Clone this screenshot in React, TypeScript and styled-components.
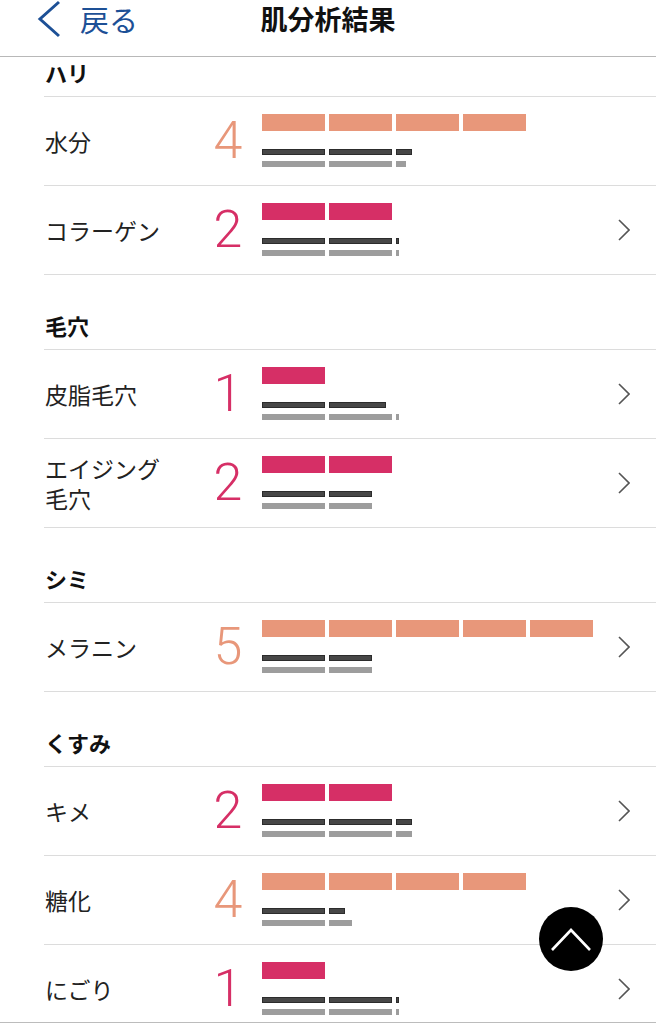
import React from 'react';
import styled, { createGlobalStyle } from 'styled-components';

const ORANGE = '#e8977a';
const PINK = '#d62f66';

const GlobalStyle = createGlobalStyle`
  html, body {
    margin: 0;
    padding: 0;
    background: #fff;
  }
  body {
    font-family: "Noto Sans CJK JP", "Noto Sans", sans-serif;
    color: #222;
  }
`;

const Page = styled.div`
  position: relative;
  width: 656px;
  height: 1024px;
  overflow: hidden;
  display: flex;
  flex-direction: column;
  background: #fff;
`;

const Header = styled.header`
  flex: none;
  height: 56px;
  border-bottom: 1px solid #b8b8b8;
  display: grid;
  grid-template-columns: 1fr auto 1fr;
  align-items: start;
`;

const BackButton = styled.button`
  display: flex;
  align-items: center;
  gap: 17px;
  padding: 0 0 0 37px;
  margin: -2px 0 0;
  border: none;
  background: none;
  color: #1d5096;
  font-family: "Noto Sans CJK JP", sans-serif;
  font-size: 29px;
  line-height: 42px;
  cursor: pointer;
  justify-self: start;
`;

const Title = styled.h1`
  margin: 0;
  font-size: 27px;
  font-weight: 700;
  line-height: 40px;
  margin-top: -1px;
  color: #111;
`;

const Scroller = styled.main`
  flex: 1;
  overflow: hidden;
`;

const List = styled.div`
  margin-top: -35px;
  margin-left: 44px;
`;

const SectionHead = styled.h2`
  box-sizing: border-box;
  height: 75px;
  margin: 0;
  padding: 0 0 11px 1px;
  display: flex;
  align-items: flex-end;
  font-size: 22px;
  font-weight: 700;
  line-height: 26px;
  color: #111;
  border-bottom: 1px solid #dcdcdc;
`;

const Row = styled.div`
  box-sizing: border-box;
  height: 89px;
  display: grid;
  grid-template-columns: 156px 56px 1fr 38px;
  align-items: center;
  border-bottom: 1px solid #dcdcdc;
`;

const Label = styled.div`
  padding-left: 1px;
  font-size: 23px;
  line-height: 30px;
  color: #222;
  white-space: pre-line;
`;

const Score = styled.div<{ $color: string }>`
  text-align: center;
  font-family: Roboto, "Open Sans", sans-serif;
  font-weight: 300;
  font-size: 52px;
  line-height: 1;
  color: ${({ $color }) => $color};
`;

const Bars = styled.div`
  align-self: start;
  margin-left: 6px;
  padding-top: 17px;
  display: flex;
  flex-direction: column;
`;

const Level = styled.div`
  display: flex;
  gap: 4px;
  height: 17px;
`;

const Block = styled.span<{ $color: string }>`
  width: 63px;
  height: 17px;
  background: ${({ $color }) => $color};
`;

const Line = styled.div<{ $dark?: boolean }>`
  display: flex;
  gap: 4px;
  height: 6px;
  margin-top: ${({ $dark }) => ($dark ? '18px' : '6px')};
`;

const Dash = styled.span<{ $dark?: boolean }>`
  height: 6px;
  background: ${({ $dark }) => ($dark ? '#474747' : '#9d9d9d')};
  box-shadow: ${({ $dark }) => ($dark ? 'inset 0 0 0 1px #2c2c2c' : 'none')};
`;

const Chevron = styled.svg`
  display: block;
`;

const ToTop = styled.button`
  position: absolute;
  left: 539px;
  top: 907px;
  width: 64px;
  height: 64px;
  border-radius: 50%;
  border: none;
  padding: 0;
  background: #000;
  display: flex;
  align-items: center;
  justify-content: center;
  cursor: pointer;
`;

const Footer = styled.footer`
  flex: none;
  height: 1px;
  border-top: 1px solid #bcbcbc;
`;

type Item = {
  label: string;
  score: number;
  dark: number[];
  gray: number[];
  arrow?: boolean;
};

type Section = { title: string; items: Item[] };

const sections: Section[] = [
  {
    title: 'ハリ',
    items: [
      { label: '水分', score: 4, dark: [63, 63, 16], gray: [63, 63, 10] },
      { label: 'コラーゲン', score: 2, dark: [63, 63, 3], gray: [63, 63, 3], arrow: true },
    ],
  },
  {
    title: '毛穴',
    items: [
      { label: '皮脂毛穴', score: 1, dark: [63, 57], gray: [63, 63, 3], arrow: true },
      { label: 'エイジング\n毛穴', score: 2, dark: [63, 43], gray: [63, 43], arrow: true },
    ],
  },
  {
    title: 'シミ',
    items: [{ label: 'メラニン', score: 5, dark: [63, 43], gray: [63, 43], arrow: true }],
  },
  {
    title: 'くすみ',
    items: [
      { label: 'キメ', score: 2, dark: [63, 63, 16], gray: [63, 63, 16], arrow: true },
      { label: '糖化', score: 4, dark: [63, 16], gray: [63, 23], arrow: true },
      { label: 'にごり', score: 1, dark: [63, 63, 3], gray: [63, 63, 3], arrow: true },
    ],
  },
];

// 3以上はオレンジ、それ未満はピンク
const scoreColor = (score: number) => (score >= 3 ? ORANGE : PINK);

const ResultRow: React.FC<{ item: Item }> = ({ item }) => {
  const color = scoreColor(item.score);
  return (
    <Row>
      <Label>{item.label}</Label>
      <Score $color={color}>{item.score}</Score>
      <Bars>
        <Level>
          {Array.from({ length: item.score }).map((_, i) => (
            <Block key={i} $color={color} />
          ))}
        </Level>
        <Line $dark>
          {item.dark.map((w, i) => (
            <Dash key={i} $dark style={{ width: w }} />
          ))}
        </Line>
        <Line>
          {item.gray.map((w, i) => (
            <Dash key={i} style={{ width: w }} />
          ))}
        </Line>
      </Bars>
      <div>
        {item.arrow && (
          <Chevron width="12" height="22" viewBox="0 0 12 22">
            <polyline points="1,1 11,11 1,21" fill="none" stroke="#555" strokeWidth="1.6" />
          </Chevron>
        )}
      </div>
    </Row>
  );
};

const App: React.FC = () => {
  return (
    <>
      <GlobalStyle />
      <Page>
        <Header>
          <BackButton>
            <svg width="26" height="38" viewBox="0 0 26 38">
              <polyline points="22,2 3,19 22,36" fill="none" stroke="#1d5096" strokeWidth="3" />
            </svg>
            戻る
          </BackButton>
          <Title>肌分析結果</Title>
          <div />
        </Header>
        <Scroller>
          <List>
            {sections.map((s) => (
              <React.Fragment key={s.title}>
                <SectionHead>{s.title}</SectionHead>
                {s.items.map((item) => (
                  <ResultRow key={item.label} item={item} />
                ))}
              </React.Fragment>
            ))}
          </List>
        </Scroller>
        <Footer />
        <ToTop aria-label="ページトップへ">
          <svg width="40" height="26" viewBox="0 0 40 26">
            <polyline points="1,24 20,4 39,24" fill="none" stroke="#fff" strokeWidth="2.6" />
          </svg>
        </ToTop>
      </Page>
    </>
  );
};

export default App;
